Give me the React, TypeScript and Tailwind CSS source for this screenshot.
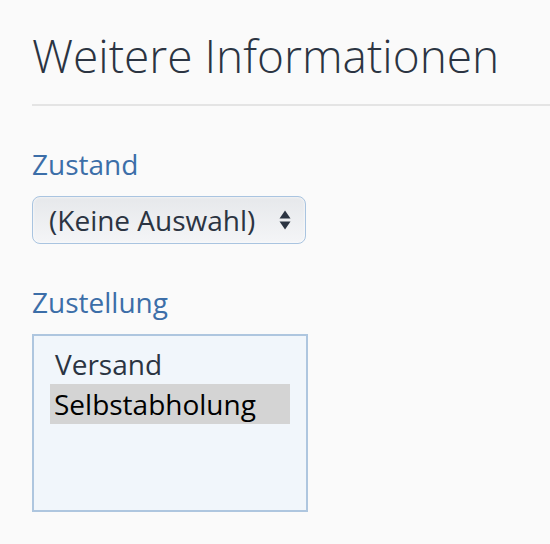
const FONT = { fontFamily: '"Open Sans", "Noto Sans", sans-serif' };

function Arrows() {
  return (
    <svg width="12" height="20" viewBox="0 0 12 20" className="text-[#2b3442]">
      <path d="M6 0.5 L11.5 8.5 L0.5 8.5 Z" fill="currentColor" />
      <path d="M0.5 11.5 L11.5 11.5 L6 19.5 Z" fill="currentColor" />
    </svg>
  );
}

export default function App() {
  return (
    <div className="min-h-[544px] bg-[#fafafa] pl-[32px]" style={FONT}>
      <h1 className="pt-[26px] text-[46px] font-light leading-[58px] text-[#2b3442]">
        Weitere Informationen
      </h1>
      <div className="mt-[20px] h-[2px] bg-[#e4e4e4]" />

      <div className="mt-[40px] text-[28px] leading-[36px] text-[#3c6ea8]">Zustand</div>
      <div className="mt-[14px] flex h-[48px] w-[274px] items-center justify-between rounded-[8px] border border-[#a9c4e0] bg-gradient-to-b from-[#e6e8eb] to-[#f4f5f7] pl-[16px] pr-[14px] shadow-[inset_0_0_3px_rgba(255,255,255,0.9)]">
        <span className="text-[28px] leading-[36px] text-[#2b3442]">(Keine Auswahl)</span>
        <Arrows />
      </div>

      <div className="mt-[40px] text-[28px] leading-[36px] text-[#3c6ea8]">Zustellung</div>
      <div className="mt-[14px] h-[178px] w-[276px] border-2 border-[#aec6df] bg-[#f1f6fb] px-[16px] py-[8px]">
        <div className="px-[5px] text-[28px] leading-[40px] text-[#2b3442]">Versand</div>
        <div className="bg-[#d4d4d4] px-[4px] text-[28px] leading-[40px] text-black">Selbstabholung</div>
      </div>
    </div>
  );
}
